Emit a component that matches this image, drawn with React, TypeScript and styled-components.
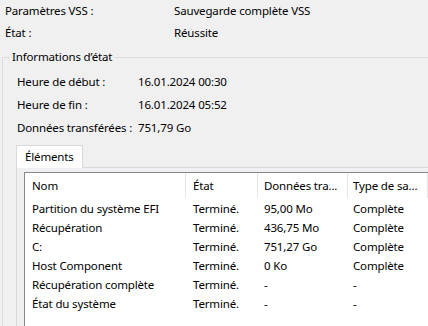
import React from "react";
import styled, { createGlobalStyle } from "styled-components";

const Global = createGlobalStyle`
  html, body {
    margin: 0;
    padding: 0;
    background: #f0f0f0;
    overflow: hidden;
  }
  body {
    font-family: "Noto Sans", "Open Sans", sans-serif;
    font-size: 11.5px;
    letter-spacing: -0.15px;
    color: #000;
  }
`;

const Page = styled.div`
  width: 428px;
  height: 326px;
  overflow: hidden;
  background: #f0f0f0;
`;

const InfoGrid = styled.div<{ $labelWidth: number; $rowHeight: number }>`
  display: grid;
  grid-template-columns: ${(p) => p.$labelWidth}px 1fr;
  grid-auto-rows: ${(p) => p.$rowHeight}px;
  align-items: center;
  white-space: nowrap;
`;

const TopGrid = styled(InfoGrid)`
  padding-left: 5px;
`;

const Label = styled.div`
  line-height: 16px;
`;

const GroupBox = styled.fieldset`
  margin: 5px -20px 0 2px;
  padding: 5px 0 0 13px;
  border: 1px solid #dcdcdc;
  min-width: 0;
  height: 400px;
`;

const Legend = styled.legend`
  margin-left: -6px;
  padding: 0 2px;
  line-height: 16px;
  height: 16px;
`;

const GroupGrid = styled(InfoGrid)`
  padding-left: 1px;
`;

const TabStrip = styled.div`
  display: flex;
  margin-top: 6px;
  height: 22px;
`;

const Tab = styled.div<{ $active?: boolean }>`
  box-sizing: border-box;
  height: 23px;
  padding: 0 8px;
  line-height: 21px;
  border: 1px solid #d9d9d9;
  border-bottom: none;
  background: ${(p) => (p.$active ? "#ffffff" : "#f0f0f0")};
  position: relative;
  z-index: 1;
`;

const TabPanel = styled.div`
  border-left: 1px solid #d9d9d9;
  border-top: 1px solid #d9d9d9;
  padding: 4px 0 0 7px;
  background: #f0f0f0;
  height: 300px;
`;

const ListView = styled.div`
  border: 1px solid #828790;
  background: #ffffff;
  height: 300px;
`;

const Table = styled.div`
  display: grid;
  grid-template-columns: 161px 72px 90px 80px;
  white-space: nowrap;
`;

const HeaderCell = styled.div<{ $pad: number }>`
  height: 25px;
  line-height: 25px;
  padding-left: ${(p) => p.$pad}px;
  border-right: 1px solid #e5e5e5;
  box-sizing: border-box;
  overflow: hidden;
  margin-bottom: 1px;
`;

const Cell = styled.div<{ $pad: number }>`
  height: 19px;
  line-height: 19px;
  padding-left: ${(p) => p.$pad}px;
  overflow: hidden;
`;

const pads = [7, 7, 6, 5];

const headers = ["Nom", "État", "Données tra...", "Type de sa..."];

const rows: string[][] = [
  ["Partition du système EFI", "Terminé.", "95,00 Mo", "Complète"],
  ["Récupération", "Terminé.", "436,75 Mo", "Complète"],
  ["C:", "Terminé.", "751,27 Go", "Complète"],
  ["Host Component", "Terminé.", "0 Ko", "Complète"],
  ["Récupération complète", "Terminé.", "-", "-"],
  ["État du système", "Terminé.", "-", "-"],
];

export default function App() {
  return (
    <Page>
      <Global />
      <TopGrid $labelWidth={169} $rowHeight={22}>
        <Label>Paramètres VSS :</Label>
        <Label>Sauvegarde complète VSS</Label>
        <Label>État :</Label>
        <Label>Réussite</Label>
      </TopGrid>
      <GroupBox>
        <Legend>Informations d’état</Legend>
        <GroupGrid $labelWidth={121} $rowHeight={23}>
          <Label>Heure de début :</Label>
          <Label>16.01.2024 00:30</Label>
          <Label>Heure de fin :</Label>
          <Label>16.01.2024 05:52</Label>
          <Label>Données transférées :</Label>
          <Label>751,79 Go</Label>
        </GroupGrid>
        <TabStrip>
          <Tab $active>Éléments</Tab>
        </TabStrip>
        <TabPanel>
          <ListView>
            <Table>
              {headers.map((h, i) => (
                <HeaderCell key={h} $pad={pads[i]}>
                  {h}
                </HeaderCell>
              ))}
              {rows.map((r, ri) =>
                r.map((c, ci) => (
                  <Cell key={`${ri}-${ci}`} $pad={pads[ci]}>
                    {c}
                  </Cell>
                ))
              )}
            </Table>
          </ListView>
        </TabPanel>
      </GroupBox>
    </Page>
  );
}
